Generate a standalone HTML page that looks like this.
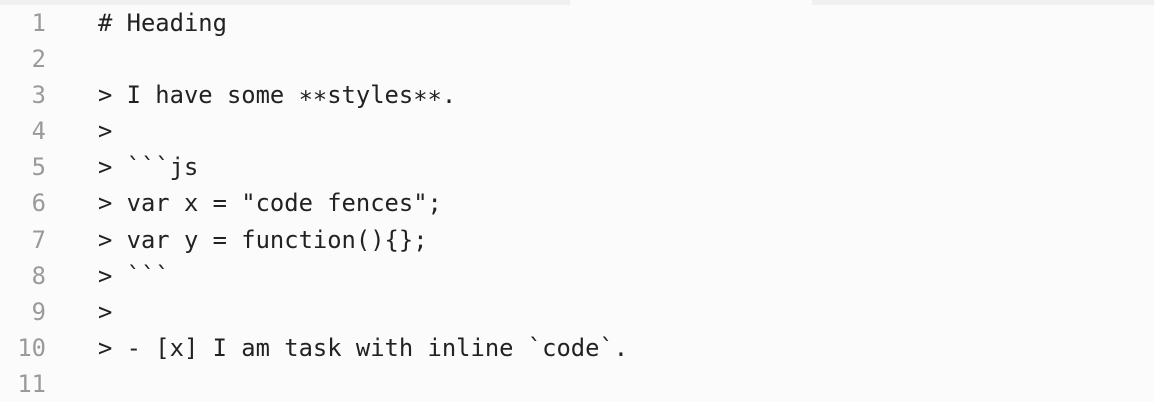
<!DOCTYPE html>
<html><head><style>
html,body{margin:0;padding:0;width:1154px;height:402px;overflow:hidden;background:#fbfbfb;}
.bar{position:absolute;top:0;height:5px;background:#f0f0f0;}
.wrap{position:absolute;top:5px;left:0;font-family:"DejaVu Sans Mono","Liberation Mono",monospace;font-size:23.8px;line-height:36.1px;}
.row{height:36.1px;white-space:pre;position:relative;}
.n{position:absolute;left:0;width:46px;text-align:right;color:#9a9a9a;}
.t{position:absolute;left:98px;color:#222;}
</style></head><body>
<div class="bar" style="left:0;width:570px"></div>
<div class="bar" style="left:812px;width:342px"></div>
<div class="wrap">
<div class="row"><span class="n">1</span><span class="t"># Heading</span></div>
<div class="row"><span class="n">2</span><span class="t"></span></div>
<div class="row"><span class="n">3</span><span class="t">&gt; I have some &#8727;&#8727;styles&#8727;&#8727;.</span></div>
<div class="row"><span class="n">4</span><span class="t">&gt;</span></div>
<div class="row"><span class="n">5</span><span class="t">&gt; &#96;&#96;&#96;js</span></div>
<div class="row"><span class="n">6</span><span class="t">&gt; var x = "code fences";</span></div>
<div class="row"><span class="n">7</span><span class="t">&gt; var y = function(){};</span></div>
<div class="row"><span class="n">8</span><span class="t">&gt; &#96;&#96;&#96;</span></div>
<div class="row"><span class="n">9</span><span class="t">&gt;</span></div>
<div class="row"><span class="n">10</span><span class="t">&gt; - [x] I am task with inline &#96;code&#96;.</span></div>
<div class="row"><span class="n">11</span><span class="t"></span></div>
</div>
</body></html>
